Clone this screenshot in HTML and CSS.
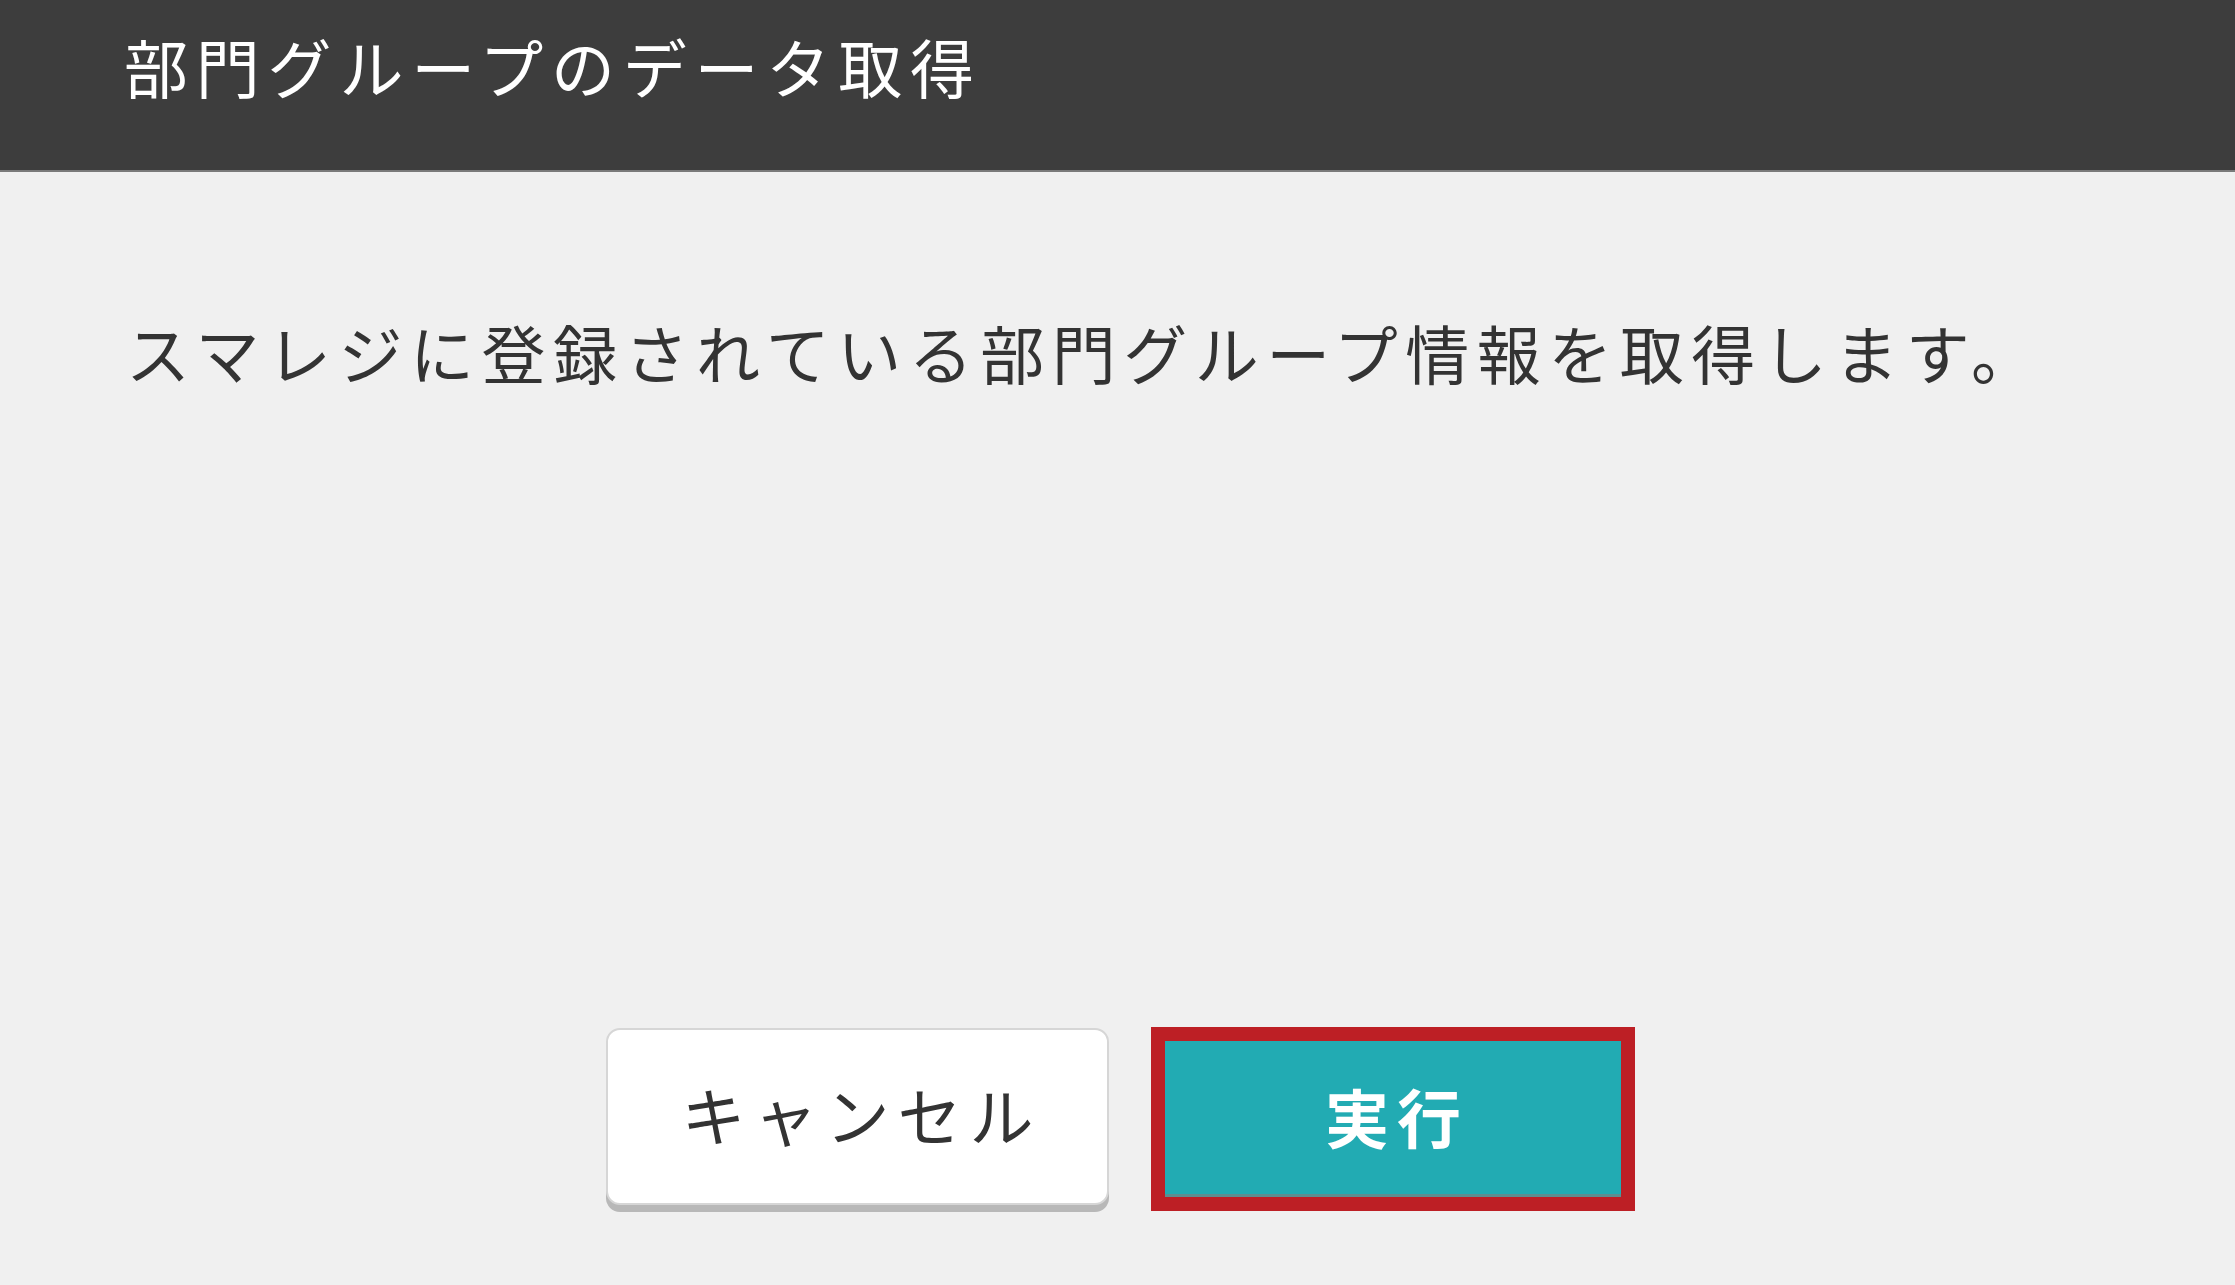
FILE: index.html
```html
<!DOCTYPE html>
<html lang="ja">
<head>
<meta charset="utf-8">
<title>部門グループのデータ取得</title>
<link rel="stylesheet" href="styles.css">
</head>
<body>
<div class="dialog">
  <header class="dialog-header">
    <h1 class="dialog-title">部門グループのデータ取得</h1>
  </header>
  <main class="dialog-body">
    <p class="message">スマレジに登録されている部門グループ情報を取得します。</p>
  </main>
  <footer class="dialog-footer">
    <button class="btn btn-cancel" type="button">キャンセル</button>
    <div class="highlight">
      <button class="btn btn-run" type="button">実行</button>
    </div>
  </footer>
</div>
</body>
</html>
```

FILE: styles.css
```css
html, body {
  margin: 0;
  padding: 0;
  height: 100%;
}

body {
  background: #f0f0f0;
  font-family: "Noto Sans CJK JP", "Noto Sans", sans-serif;
  color: #333333;
}

.dialog {
  height: 100vh;
  display: flex;
  flex-direction: column;
}

.dialog-header {
  height: 170px;
  background: #3d3d3d;
  border-bottom: 2px solid #7a7a7a;
  box-sizing: content-box;
  display: flex;
  align-items: flex-start;
  padding-left: 124px;
}

.dialog-title {
  margin: 0;
  padding-top: 27px;
  font-size: 64px;
  font-weight: 400;
  line-height: 76px;
  letter-spacing: 7.8px;
  color: #ffffff;
}

.dialog-body {
  padding: 139px 0 0 126px;
}

.message {
  margin: 0;
  font-size: 64px;
  line-height: 80px;
  letter-spacing: 7.5px;
  color: #333333;
}

.dialog-footer {
  margin-top: auto;
  padding: 0 0 74px 6px;
  display: flex;
  justify-content: center;
  align-items: flex-start;
  gap: 42px;
}

.btn {
  font-family: inherit;
  font-size: 64px;
  letter-spacing: 8px;
  cursor: pointer;
}

.btn-cancel {
  width: 503px;
  height: 177px;
  margin-top: 1px;
  background: #ffffff;
  border: 2px solid #d6d6d6;
  border-radius: 14px;
  box-shadow: 0 7px 0 #b8b8b8;
  color: #333333;
  padding: 0 0 8px 8px;
}

.highlight {
  border: 14px solid #bd1f25;
  width: 456px;
  height: 156px;
  display: flex;
}

.btn-run {
  flex: 1;
  margin: 0;
  border: 0;
  background: #22abb3;
  box-shadow: inset 0 -3px 0 #5e8d90;
  color: #ffffff;
  font-weight: 700;
  padding: 0 0 8px 8px;
}
```
